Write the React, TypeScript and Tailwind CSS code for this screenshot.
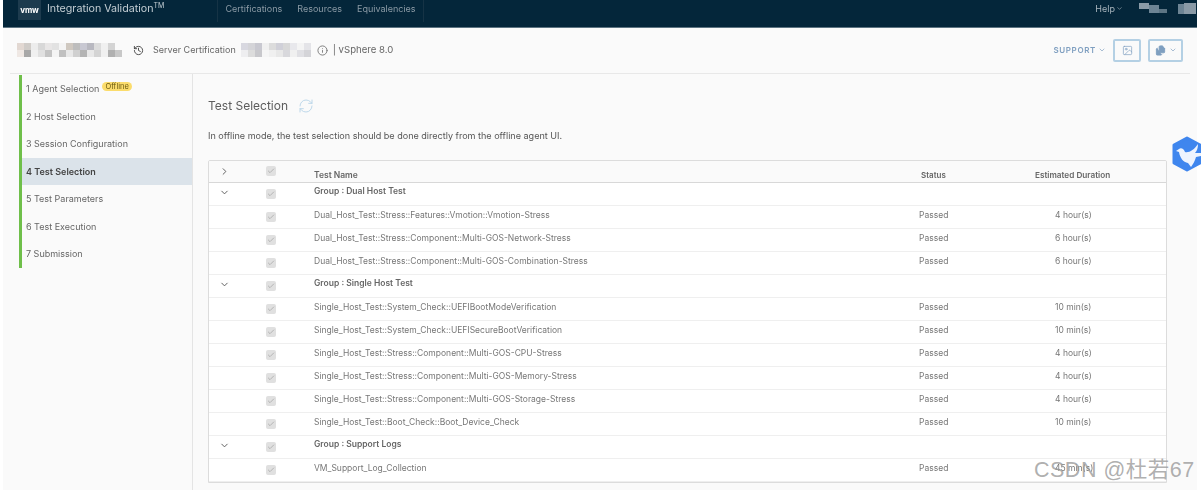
import { ChevronDown, ChevronRight, Check, History, Info, RefreshCw, Image, Files } from "lucide-react";

type Row = { group?: boolean; name: string; status?: string; duration?: string };

const ROWS: Row[] = [
  { group: true, name: "Group : Dual Host Test" },
  { name: "Dual_Host_Test::Stress::Features::Vmotion::Vmotion-Stress", status: "Passed", duration: "4 hour(s)" },
  { name: "Dual_Host_Test::Stress::Component::Multi-GOS-Network-Stress", status: "Passed", duration: "6 hour(s)" },
  { name: "Dual_Host_Test::Stress::Component::Multi-GOS-Combination-Stress", status: "Passed", duration: "6 hour(s)" },
  { group: true, name: "Group : Single Host Test" },
  { name: "Single_Host_Test::System_Check::UEFIBootModeVerification", status: "Passed", duration: "10 min(s)" },
  { name: "Single_Host_Test::System_Check::UEFISecureBootVerification", status: "Passed", duration: "10 min(s)" },
  { name: "Single_Host_Test::Stress::Component::Multi-GOS-CPU-Stress", status: "Passed", duration: "4 hour(s)" },
  { name: "Single_Host_Test::Stress::Component::Multi-GOS-Memory-Stress", status: "Passed", duration: "4 hour(s)" },
  { name: "Single_Host_Test::Stress::Component::Multi-GOS-Storage-Stress", status: "Passed", duration: "4 hour(s)" },
  { name: "Single_Host_Test::Boot_Check::Boot_Device_Check", status: "Passed", duration: "10 min(s)" },
  { group: true, name: "Group : Support Logs" },
  { name: "VM_Support_Log_Collection", status: "Passed", duration: "45 min(s)" },
];

const STEPS = ["1 Agent Selection", "2 Host Selection", "3 Session Configuration", "4 Test Selection", "5 Test Parameters", "6 Test Execution", "7 Submission"];

// redacted bits of the screenshot, drawn as pixel blocks
function Mosaic({ colors, className }: { colors: string[]; className: string }) {
  return (
    <span className={`flex h-[14px] shrink-0 flex-wrap content-start ${className}`}>
      {colors.map((c, i) => (
        <span key={i} className="h-[7px] w-[7px]" style={{ backgroundColor: c }} />
      ))}
    </span>
  );
}

const M1 = [
  "#e2d8d2", "#d0ccc8", "#ececec", "#d8d8d8", "#e8e6e6", "#e2e2e2", "#f4f4f4", "#cfc8c0", "#bdbdbd", "#c8c8d2", "#b8b8c0", "#dcdcdc", "#f0f0f0", "#d4d4d4", "#fafafa",
  "#efe8e4", "#a8a8a8", "#f0f0f0", "#e0e0e0", "#c4c4c4", "#f4f4f4", "#c0c0c0", "#e8e8e8", "#d0d0d0", "#b4b4b4", "#e8e8e8", "#d4d4d4", "#f0f0f0", "#b0b0b0", "#c8c8c8",
];
const M2 = [
  "#d8d8e0", "#d4d4d8", "#c8c8d0", "#f0f0f0", "#dcdcdc", "#d0d0d8", "#d8d8d8", "#e8e8ec", "#f4f4f4", "#e4e4e8",
  "#eeeef0", "#dcdcdc", "#c8c8cc", "#f6f6f6", "#f0f0f0", "#e8e8e8", "#d8d8dc", "#f0f0f0", "#e0e0e4", "#d4d4d8",
];

function Box() {
  return (
    <span className="flex h-[10px] w-[10px] items-center justify-center rounded-[2px] bg-[#e0e0e0]">
      <Check className="h-2 w-2 text-[#a0a0a0]" strokeWidth={2} />
    </span>
  );
}

export default function App() {
  return (
    <div className="relative h-[490px] w-[1201px] overflow-hidden bg-white font-['Inter',sans-serif] text-[#666]">
      <div className="ml-[3px] mr-[4px] flex h-full flex-col bg-[#fafafa] blur-[0.3px]">
        {/* top bar */}
        <header className="flex h-[28px] shrink-0 items-start border-b border-[#5d7482] bg-[#04263a] text-[#8b9aa5]">
          <div className="ml-[15px] flex h-[20px] w-[23px] items-center justify-center bg-[#1d3b4e] text-[8px] font-bold tracking-tight text-white">vmw</div>
          <span className="ml-[6px] mt-[3px] text-[10.7px] leading-[11px] text-[#c3cdd3]">Integration Validation</span>
          <span className="mt-[2px] text-[7px] leading-[8px] text-[#c3cdd3]">TM</span>
          <nav className="ml-[53px] flex h-[22px] items-start gap-[15px] border-x border-[#163345] px-[7px] pt-[3px] text-[9px] leading-[11px]">
            <span>Certifications</span>
            <span>Resources</span>
            <span>Equivalencies</span>
          </nav>
          <div className="ml-auto mr-[1px] mt-[3px] flex items-center gap-[16px] text-[9px] leading-[11px]">
            <span className="flex items-center gap-[1px] text-[#a9b5bd]">Help<ChevronDown className="h-[7px] w-[7px]" /></span>
            <span className="flex items-start">
              <span className="h-[6px] w-[10px] bg-[#8a9aa6]" />
              <span className="mt-[2px] h-[8px] w-[10px] bg-[#6d8494]" />
              <span className="mt-[6px] h-[4px] w-[8px] bg-[#5d7584]" />
              <span className="ml-[11px] mt-[1px] h-[10px] w-[6px] bg-[#6d8494]" />
              <span className="h-[11px] w-[12px] bg-[#8a9aa6]" />
            </span>
          </div>
        </header>

        {/* sub header */}
        <div className="mx-[7px] flex h-[46px] shrink-0 items-center border-b border-[#e8e8e8] pb-[1px] pl-[7px] pr-[7px] text-[9px]">
          <Mosaic colors={M1} className="w-[105px]" />
          <History className="ml-[11px] h-[11px] w-[11px] text-[#444]" />
          <span className="ml-[9px]">Server Certification</span>
          <span className="ml-[5px]"><Mosaic colors={M2} className="w-[70px]" /></span>
          <Info className="ml-[6px] h-[11px] w-[11px] text-[#777]" />
          <span className="ml-[5px] text-[9.6px]">| vSphere 8.0</span>
          <span className="ml-auto flex items-center gap-[2px] text-[8px] font-semibold tracking-[0.08em] text-[#7f9fc0]">SUPPORT<ChevronDown className="h-[8px] w-[8px]" /></span>
          <button className="ml-[7px] flex h-[23px] w-[28px] items-center justify-center rounded-[2px] border-2 border-[#b4d0e4] text-[#7f9fc0]">
            <Image className="h-[11px] w-[11px]" strokeWidth={1.5} />
          </button>
          <button className="ml-[7px] flex h-[23px] w-[35px] items-center justify-center gap-[3px] rounded-[2px] border-2 border-[#b4d0e4] text-[#7f9fc0]">
            <Files className="h-[11px] w-[11px]" fill="#7f9fc0" />
            <ChevronDown className="h-[8px] w-[8px]" />
          </button>
        </div>

        <div className="flex min-h-0 flex-1">
          {/* steps */}
          <aside className="w-[190px] shrink-0 border-r border-[#e4e4e4] pl-[16px] pt-[1px]">
            {STEPS.map((s, i) => (
              <div key={s} className={`flex h-[27.5px] items-center gap-[3px] border-l-[3px] border-[#6fbf4a] pl-[4px] text-[9px] ${i === 3 ? "bg-[#dbe3ea] font-semibold text-[#444]" : ""}`}>
                <span>{s}</span>
                {i === 0 && <span className="mb-[4px] rounded-full bg-[#fbdc6c] px-[3px] text-[7.5px] leading-[9px] text-[#6b5a10]">Offline</span>}
              </div>
            ))}
          </aside>

          {/* main */}
          <main className="min-w-0 flex-1 pl-[15px] pr-[30px] pt-[23px]">
            <div className="flex h-[17px] items-center gap-[10px]">
              <h1 className="text-[12px] font-normal text-[#5c5c5c]">Test Selection</h1>
              <RefreshCw className="h-[16px] w-[16px] text-[#b9d5e8]" strokeWidth={1.4} />
            </div>
            <p className="mt-[16px] text-[9.05px] leading-[11px] text-[#555]">In offline mode, the test selection should be done directly from the offline agent UI.</p>

            <div className="mt-[19px] overflow-hidden rounded-t-[2px] border border-[#dcdcdc] bg-white text-[8.5px]">
              <div className="flex h-[22px] items-center border-b border-[#d8d8d8] bg-[#fafafa] font-semibold text-[#666]">
                <span className="flex w-[57px] justify-center pb-[1px] pr-[26px]"><ChevronRight className="h-[11px] w-[11px] text-[#555]" /></span>
                <span className="flex w-[48px] pb-[1px]"><Box /></span>
                <span className="mt-[8px] w-[607px]">Test Name</span>
                <span className="mt-[7px] w-[114px] text-[8px]">Status</span>
                <span className="mt-[7px] text-[8.2px]">Estimated Duration</span>
              </div>
              {ROWS.map((r) => (
                <div key={r.name} className="flex h-[23px] border-b border-[#efefef]">
                  <span className="flex w-[57px] justify-center pr-[26px] pt-[4px]">
                    {r.group && <ChevronDown className="h-[11px] w-[11px] text-[#555]" />}
                  </span>
                  <span className="flex w-[48px] items-center"><Box /></span>
                  <span className={`w-[605px] leading-[11px] ${r.group ? "pt-[3px] font-semibold" : "pt-[4px] text-[#777]"}`}>{r.name}</span>
                  <span className="w-[136px] pt-[4px] leading-[11px] text-[#777]">{r.status}</span>
                  <span className="pt-[4px] leading-[11px] text-[#777]">{r.duration}</span>
                </div>
              ))}
            </div>
          </main>
        </div>
      </div>

      {/* floating bird badge */}
      <svg viewBox="0 0 29 36" className="absolute left-[1172px] top-[136px] h-[36px] w-[29px]">
        <path d="M15 2 28 9v18l-13 7-13-7V9Z" fill="#3f86ee" stroke="#3f86ee" strokeWidth="3" strokeLinejoin="round" />
        <path d="M4 15 7 13C9 11 12 13 13 16 17 17 22 14 26 8 26 12 25 15 23 17L29 17V20L24 21C23 25 21 28 19 31L16 27C11 26 8 22 7 16Z" fill="#eef4fe" />
      </svg>

      {/* watermark */}
      <span className="absolute left-[1034px] top-[457px] whitespace-nowrap font-['Liberation_Sans','Noto_Sans_CJK_SC',sans-serif] text-[21.5px] leading-[26px] tracking-[0.5px] text-[#9a9a9a]/80">CSDN @杜若67</span>
    </div>
  );
}
